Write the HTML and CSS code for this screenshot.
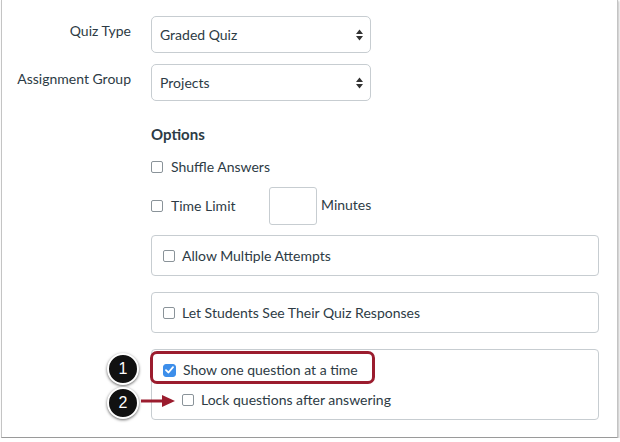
FILE: index.html
```html
<!DOCTYPE html>
<html>
<head>
<meta charset="utf-8">
<link rel="stylesheet" href="styles.css">
</head>
<body>
<div class="frame">
  <div class="form">
    <div class="field">
      <label class="field-label">Quiz Type</label>
      <div class="select">
        <span>Graded Quiz</span>
        <svg class="arrows" width="7" height="12" viewBox="0 0 7 12"><path d="M3.5 0.5 L7 5 L0 5 Z M0 7 L7 7 L3.5 11.5 Z" fill="#333"/></svg>
      </div>
    </div>
    <div class="field">
      <label class="field-label second">Assignment Group</label>
      <div class="select">
        <span>Projects</span>
        <svg class="arrows" width="7" height="12" viewBox="0 0 7 12"><path d="M3.5 0.5 L7 5 L0 5 Z M0 7 L7 7 L3.5 11.5 Z" fill="#333"/></svg>
      </div>
    </div>
    <div class="field options">
      <div></div>
      <div class="opts">
        <h3 class="heading">Options</h3>
        <div class="opt shuffle"><span class="cb"></span><span>Shuffle Answers</span></div>
        <div class="opt timelimit"><span class="cb"></span><span class="tl-label">Time Limit</span><span class="num-input"></span><span class="minutes">Minutes</span></div>
        <div class="box"><div class="opt"><span class="cb"></span><span>Allow Multiple Attempts</span></div></div>
        <div class="box"><div class="opt"><span class="cb"></span><span>Let Students See Their Quiz Responses</span></div></div>
        <div class="box box-tall">
          <div class="opt"><span class="cb checked"><svg width="9" height="8" viewBox="0 0 9 8"><path d="M1 4.2 L3.5 6.5 L8 1.2" fill="none" stroke="#fff" stroke-width="1.8" stroke-linecap="round" stroke-linejoin="round"/></svg></span><span>Show one question at a time</span></div>
          <div class="opt indent"><span class="cb"></span><span>Lock questions after answering</span></div>
          <div class="highlight"></div>
          <div class="badge b1">1</div>
          <div class="badge b2">2</div>
          <svg class="arrow" width="36" height="14" viewBox="0 0 36 14"><path d="M0 7 H24" stroke="#9b1c2e" stroke-width="3"/><path d="M21 1 L34 7 L21 13 Z" fill="#9b1c2e"/></svg>
        </div>
      </div>
    </div>
  </div>
</div>
</body>
</html>
```
FILE: styles.css
```css
* { box-sizing: border-box; }
html, body { margin: 0; padding: 0; background: #fff; }
body {
  font-family: Lato, "Liberation Sans", sans-serif;
  font-size: 14px;
  color: #2d3b45;
}
.frame {
  margin-left: 1px;
  width: 617px;
  height: 438px;
  border-left: 1px solid #c4c4c4;
  border-right: 1px solid #c4c4c4;
  border-bottom: 1px solid #9a9a9a;
  box-shadow: 1px 1px 2px rgba(0,0,0,0.25);
  background: #fff;
}
.form { padding: 16px 18px 0 0; }
.field {
  display: grid;
  grid-template-columns: 129px 1fr;
  column-gap: 20px;
  margin-bottom: 11px;
}
.field-label {
  text-align: right;
  line-height: 20px;
  padding-top: 5px;
}
.select {
  width: 220px;
  height: 37px;
  border: 1px solid #c7cdd1;
  border-radius: 5px;
  display: flex;
  align-items: center;
  justify-content: space-between;
  padding: 0 7px 0 8px;
  line-height: 20px;
}
.arrows { display: block; }
.options { margin-top: 23px; }
.opts { display: flex; flex-direction: column; }
.heading {
  margin: 0;
  font-size: 15px;
  font-weight: 700;
  line-height: 20px;
}
.opt {
  display: flex;
  align-items: center;
  line-height: 20px;
  gap: 7px;
}
.shuffle { margin-top: 13px; gap: 8px; }
.timelimit { margin-top: 10px; gap: 8px; }
.tl-label { width: 90px; }
.num-input {
  width: 48px;
  height: 38px;
  border: 1px solid #c7cdd1;
  border-radius: 3px;
  margin-right: -4px;
}
.minutes { margin-top: -3px; }
.cb {
  width: 12px;
  height: 12px;
  border: 1px solid #8a9399;
  border-radius: 2px;
  background: #fff;
  flex: none;
  display: flex;
  align-items: center;
  justify-content: center;
}
.cb.checked {
  width: 13px;
  height: 13px;
  background: #3d8eea;
  border-color: #3d8eea;
  border-radius: 3px;
}
.box {
  position: relative;
  border: 1px solid #c7cdd1;
  border-radius: 4px;
  height: 41px;
  padding: 0 11px;
  display: flex;
  flex-direction: column;
  justify-content: center;
  margin-top: 10px;
}
.box + .box { margin-top: 16px; }
.box-tall {
  height: 71px;
  justify-content: flex-start;
  padding-top: 10px;
  gap: 10px;
}
.indent { padding-left: 19px; }
.highlight {
  position: absolute;
  left: -2px;
  top: 1px;
  width: 225px;
  height: 33px;
  border: 3px solid #9b1c2e;
  border-radius: 7px;
}
.badge {
  position: absolute;
  left: -45px;
  width: 32px;
  height: 32px;
  border-radius: 50%;
  background: #111;
  border: 2px solid #fff;
  box-shadow: 0 1px 3px rgba(0,0,0,0.6);
  color: #fff;
  font-family: "Liberation Sans", Arial, sans-serif;
  font-size: 16px;
  line-height: 28px;
  text-align: center;
}
.b1 { top: 3px; }
.b2 { top: 37px; }
.arrow {
  position: absolute;
  left: -11px;
  top: 44px;
}
```
